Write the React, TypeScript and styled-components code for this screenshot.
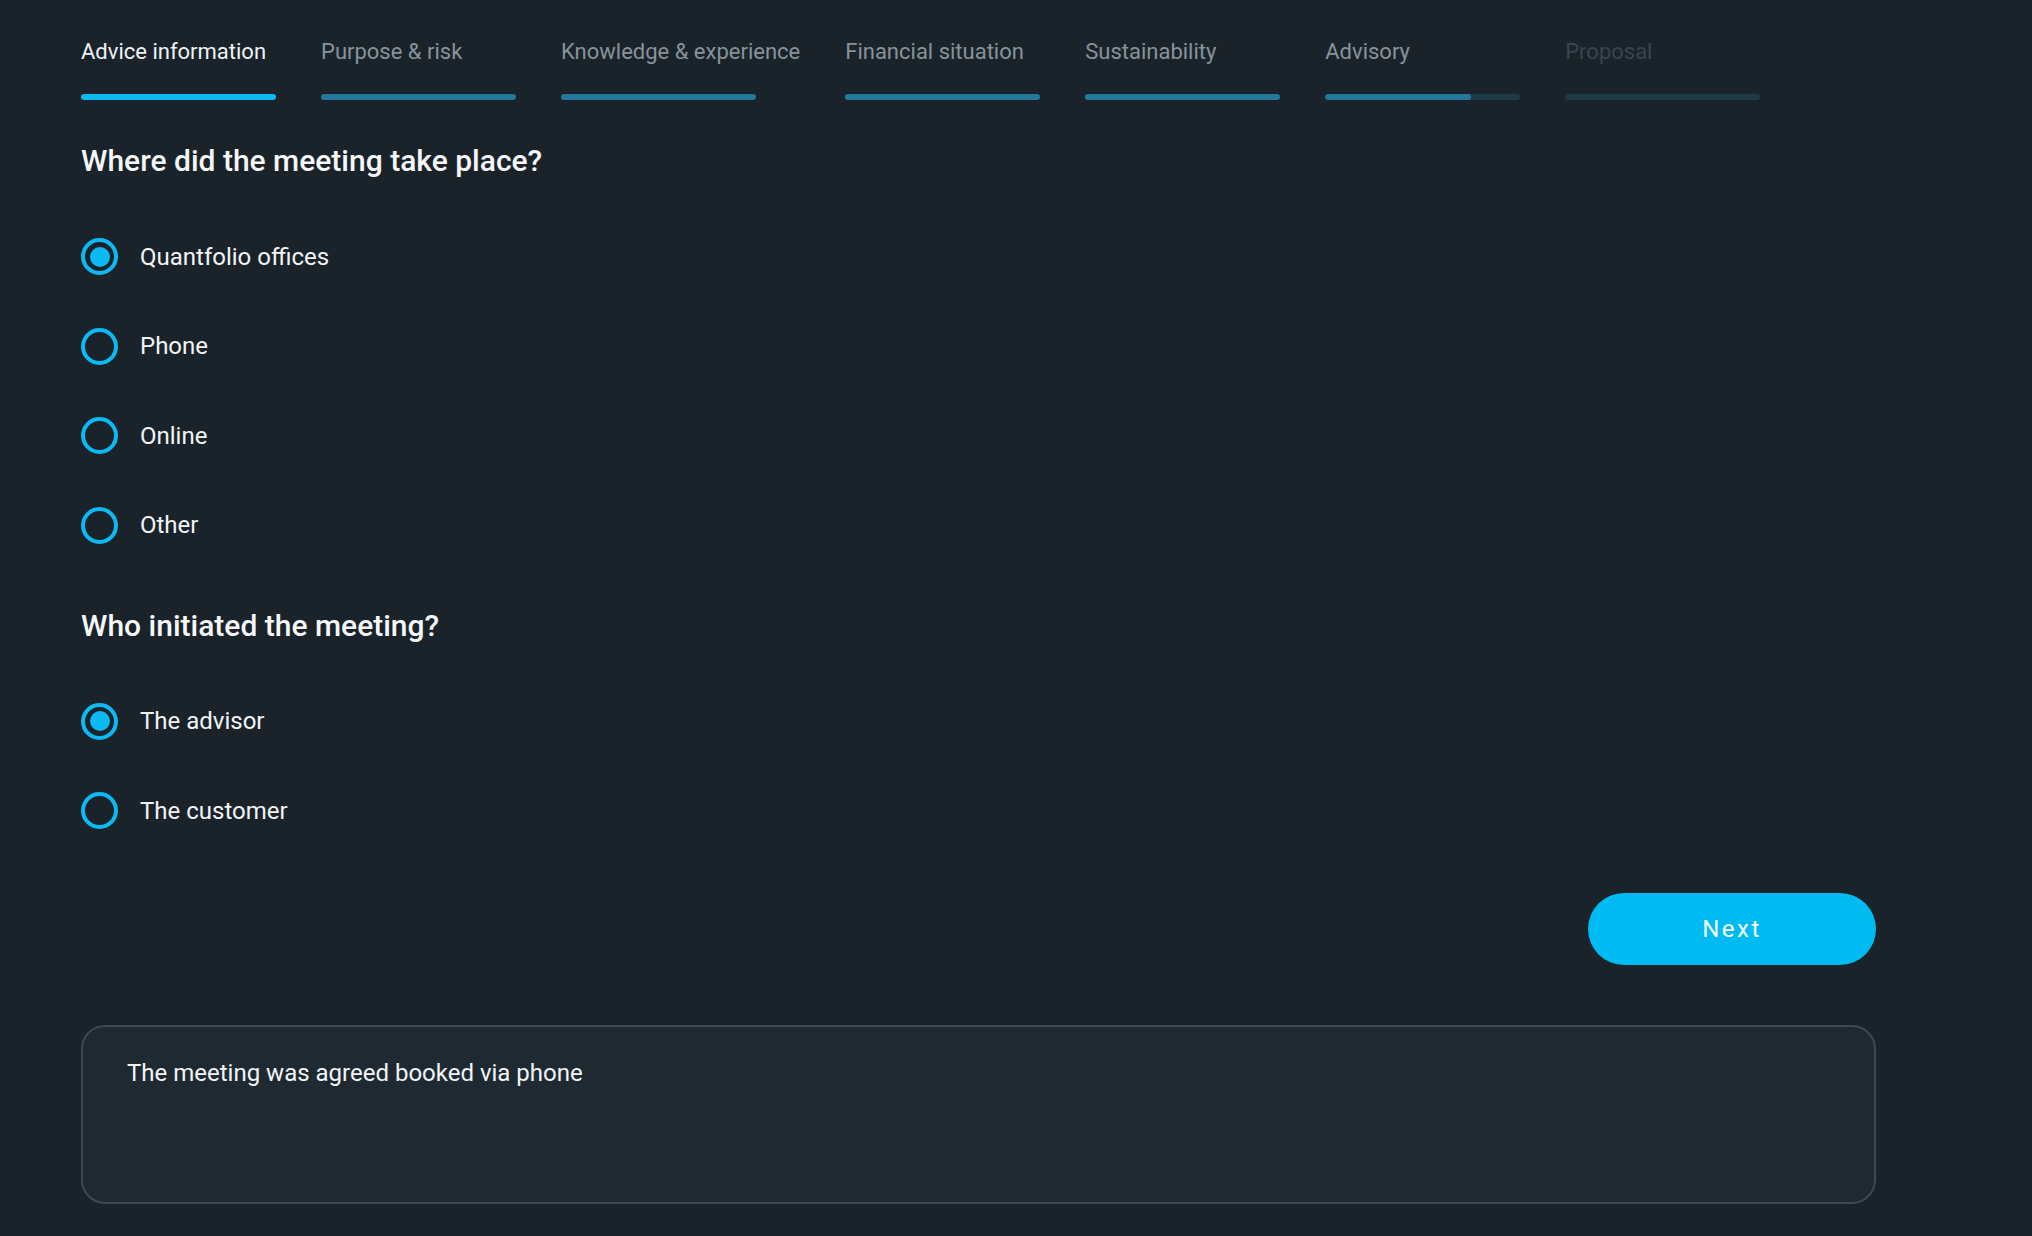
import React, { FC, useState } from "react";
import styled, { createGlobalStyle } from "styled-components";

const GlobalStyle = createGlobalStyle`
  html, body {
    margin: 0;
    padding: 0;
    background-color: #1b232a;
  }
  body {
    font-family: Roboto, "Noto Sans", "Liberation Sans", sans-serif;
    color: #f2f5f7;
  }
  * {
    box-sizing: border-box;
  }
`;

type Step = {
  label: string;
  state: "active" | "done" | "partial" | "todo";
  progress?: number;
};

const steps: Step[] = [
  { label: "Advice information", state: "active" },
  { label: "Purpose & risk", state: "done" },
  { label: "Knowledge & experience", state: "done" },
  { label: "Financial situation", state: "done" },
  { label: "Sustainability", state: "done" },
  { label: "Advisory", state: "partial", progress: 75 },
  { label: "Proposal", state: "todo" }
];

const places = ["Quantfolio offices", "Phone", "Online", "Other"];
const initiators = ["The advisor", "The customer"];

const RadioGroup: FC<{
  options: string[];
  value: string;
  onChange: (value: string) => void;
}> = ({ options, value, onChange }) => (
  <Options>
    {options.map((option) => (
      <Option key={option} onClick={() => onChange(option)}>
        <Ring checked={option === value} />
        <OptionLabel>{option}</OptionLabel>
      </Option>
    ))}
  </Options>
);

const App: FC = () => {
  const [place, setPlace] = useState<string>("Quantfolio offices");
  const [initiator, setInitiator] = useState<string>("The advisor");
  const [comment, setComment] = useState<string>("The meeting was agreed booked via phone");

  return (
    <>
      <GlobalStyle />
      <Page>
        <Steps>
          {steps.map((step) => (
            <StepItem key={step.label}>
              <StepLabel state={step.state}>{step.label}</StepLabel>
              <Track state={step.state}>
                {step.state === "partial" && <Fill style={{ width: `${step.progress}%` }} />}
              </Track>
            </StepItem>
          ))}
        </Steps>

        <Question>Where did the meeting take place?</Question>
        <RadioGroup options={places} value={place} onChange={setPlace} />

        <Question spaced>Who initiated the meeting?</Question>
        <RadioGroup options={initiators} value={initiator} onChange={setInitiator} />

        <Actions>
          <NextButton>Next</NextButton>
        </Actions>

        <Comment value={comment} onChange={(e) => setComment(e.target.value)} />
      </Page>
    </>
  );
};

export default App;

const Page = styled.div`
  width: 1876px;
  min-height: 1236px;
  padding: 37px 0 33px 81px;
  display: flex;
  flex-direction: column;
`;

const Steps = styled.div`
  display: flex;
  gap: 45px;
`;

const StepItem = styled.div`
  display: flex;
  flex-direction: column;
  gap: 27px;
  min-width: 195px;
`;

const StepLabel = styled.span<{ state: Step["state"] }>`
  font-size: 22px;
  line-height: 30px;
  white-space: nowrap;
  color: ${({ state }) =>
    state === "active" ? "#eef2f5" : state === "todo" ? "#37454e" : "#87939b"};
`;

const Track = styled.div<{ state: Step["state"] }>`
  width: 195px;
  height: 6px;
  border-radius: 3px;
  overflow: hidden;
  background-color: ${({ state }) =>
    state === "active" ? "#0cb9f2" : state === "done" ? "#23799b" : "#1f3b47"};
`;

const Fill = styled.div`
  height: 100%;
  border-radius: 3px;
  background-color: #23799b;
`;

const Question = styled.h2<{ spaced?: boolean }>`
  margin: ${({ spaced }) => (spaced ? "64px" : "43px")} 0 59px;
  font-size: 30px;
  line-height: 36px;
  font-weight: 500;
  color: #f5f7f9;
`;

const Options = styled.div`
  display: flex;
  flex-direction: column;
  gap: 52.5px;
`;

const Option = styled.label`
  display: flex;
  align-items: center;
  gap: 22px;
  height: 37px;
  cursor: pointer;
`;

const Ring = styled.span<{ checked: boolean }>`
  position: relative;
  flex: none;
  width: 37px;
  height: 37px;
  border-radius: 50%;
  border: 4px solid #0cb9f2;
  &::after {
    content: "";
    position: absolute;
    top: 4.5px;
    left: 4.5px;
    width: 20px;
    height: 20px;
    border-radius: 50%;
    background-color: #0cb9f2;
    display: ${({ checked }) => (checked ? "block" : "none")};
  }
`;

const OptionLabel = styled.span`
  font-size: 24px;
  line-height: 32px;
  color: #f2f5f7;
`;

const Actions = styled.div`
  display: flex;
  justify-content: flex-end;
  margin-top: 64px;
`;

const NextButton = styled.button`
  width: 288px;
  height: 72px;
  border: none;
  border-radius: 36px;
  background-color: #00bbf2;
  color: #f4fbff;
  font-family: Roboto, "Noto Sans", "Liberation Sans", sans-serif;
  font-size: 24px;
  font-weight: 400;
  letter-spacing: 2.5px;
  cursor: pointer;
`;

const Comment = styled.textarea`
  margin-top: 60px;
  width: 100%;
  height: 179px;
  padding: 30px 44px;
  border: 2px solid #3c4952;
  border-radius: 24px;
  background-color: #1f2931;
  color: #f2f5f7;
  font-family: Roboto, "Noto Sans", "Liberation Sans", sans-serif;
  font-size: 24px;
  line-height: 32px;
  resize: none;
  outline: none;
`;
